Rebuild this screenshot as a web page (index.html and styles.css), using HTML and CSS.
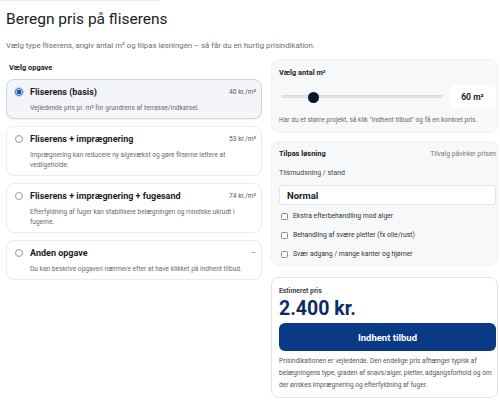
FILE: index.html
```html
<!DOCTYPE html>
<html lang="da">
<head>
<meta charset="utf-8">
<title>Beregn pris på fliserens</title>
<link rel="stylesheet" href="styles.css">
</head>
<body>
<div class="topline"></div>
<main class="page">
  <h1 class="title">Beregn pris på fliserens</h1>
  <p class="lead">Vælg type fliserens, angiv antal m² og tilpas løsningen – så får du en hurtig prisindikation.</p>

  <div class="layout">
    <section class="left">
      <div class="section-label">Vælg opgave</div>
      <div class="options">
        <label class="option selected">
          <span class="radio on"></span>
          <span class="opt-body">
            <span class="opt-head"><span class="opt-title">Fliserens (basis)</span><span class="opt-price">40 kr./m²</span></span>
            <span class="opt-desc">Vejledende pris pr. m² for grundrens af terrasse/indkørsel.</span>
          </span>
        </label>
        <label class="option">
          <span class="radio"></span>
          <span class="opt-body">
            <span class="opt-head"><span class="opt-title">Fliserens + imprægnering</span><span class="opt-price">53 kr./m²</span></span>
            <span class="opt-desc">Imprægnering kan reducere ny algevækst og gøre fliserne lettere at vedligeholde.</span>
          </span>
        </label>
        <label class="option">
          <span class="radio"></span>
          <span class="opt-body">
            <span class="opt-head"><span class="opt-title">Fliserens + imprægnering + fugesand</span><span class="opt-price">74 kr./m²</span></span>
            <span class="opt-desc">Efterfyldning af fuger kan stabilisere belægningen og mindske ukrudt i fugerne.</span>
          </span>
        </label>
        <label class="option">
          <span class="radio"></span>
          <span class="opt-body">
            <span class="opt-head"><span class="opt-title">Anden opgave</span><span class="opt-price dash">–</span></span>
            <span class="opt-desc">Du kan beskrive opgaven nærmere efter at have klikket på indhent tilbud.</span>
          </span>
        </label>
      </div>
    </section>

    <section class="right">
      <div class="panel area">
        <div class="panel-title">Vælg antal m²</div>
        <div class="slider-row">
          <input class="range" type="range" min="10" max="300" value="60">
          <div class="qty">60 m²</div>
        </div>
        <p class="hint">Har du et større projekt, så klik "Indhent tilbud" og få en konkret pris.</p>
      </div>

      <div class="panel custom">
        <div class="panel-head">
          <span class="panel-title">Tilpas løsning</span>
          <span class="panel-note">Tilvalg påvirker prisen</span>
        </div>
        <div class="field-label">Tilsmudsning / stand</div>
        <div class="select">Normal</div>
        <ul class="checks">
          <li><span class="box"></span>Ekstra efterbehandling mod alger</li>
          <li><span class="box"></span>Behandling af svære pletter (fx olie/rust)</li>
          <li><span class="box"></span>Svær adgang / mange kanter og hjørner</li>
        </ul>
      </div>

      <div class="price-card">
        <div class="price-label">Estimeret pris</div>
        <div class="price">2.400 kr.</div>
        <button class="cta" type="button">Indhent tilbud</button>
        <p class="disclaimer">Prisindikationen er vejledende. Den endelige pris afhænger typisk af belægningens type, graden af snavs/alger, pletter, adgangsforhold og om der ønskes imprægnering og efterfyldning af fuger.</p>
      </div>
    </section>
  </div>
</main>
</body>
</html>
```

FILE: styles.css
```css
* { box-sizing: border-box; }

html, body {
  margin: 0;
  padding: 0;
  background: #ffffff;
  font-family: Roboto, "Liberation Sans", Arial, sans-serif;
  color: #1d1d1f;
  overflow: hidden;
}

.topline {
  height: 1px;
  width: 160px;
  background: #ececec;
}

.page {
  padding: 7px 2px 0 6px;
}

.title {
  margin: 0;
  font-size: 15.5px;
  font-weight: 400;
  line-height: 22px;
  color: #202124;
}

.lead {
  margin: 11px 0 0;
  font-size: 7.8px;
  line-height: 10px;
  color: #6e6e6e;
}

.layout {
  display: grid;
  grid-template-columns: 256px 227px;
  column-gap: 9px;
  margin-top: 8px;
  align-items: start;
}

/* left column */
.section-label {
  margin: 4px 0 0 3px;
  font-size: 7.4px;
  font-weight: 700;
  line-height: 10px;
  color: #1d1d1f;
}

.options {
  display: flex;
  flex-direction: column;
  gap: 7px;
  margin-top: 6px;
}

.option {
  display: flex;
  align-items: flex-start;
  gap: 7px;
  padding: 6px 5px 5px 8px;
  border: 1px solid #ececec;
  border-radius: 8px;
  background: #ffffff;
}

.option.selected {
  background: #f3f5f9;
  border-color: #cfd4de;
  box-shadow: 0 1px 2px rgba(0, 0, 0, 0.06);
}

.radio {
  flex: none;
  width: 8px;
  height: 8px;
  margin-top: 2px;
  border: 1px solid #9a9a9a;
  border-radius: 50%;
  background: #fff;
}

.radio.on {
  border: 1px solid #2f62d8;
  background: radial-gradient(circle, #1f4fc4 0 2.2px, #ffffff 2.6px);
  box-shadow: 0 0 0 1px rgba(47, 98, 216, 0.25);
}

.opt-body {
  flex: 1;
  display: flex;
  flex-direction: column;
  gap: 5px;
}

.opt-head {
  display: flex;
  justify-content: space-between;
  align-items: center;
  line-height: 12px;
}

.opt-title {
  font-size: 9px;
  font-weight: 700;
  color: #1d1d1f;
}

.opt-price {
  font-size: 6.6px;
  color: #555;
}

.opt-price.dash {
  font-size: 8px;
  color: #777;
}

.opt-desc {
  font-size: 6.6px;
  line-height: 10px;
  color: #6a6a6a;
  padding-right: 12px;
}

/* right column */
.panel {
  background: #f7f8f9;
  border: 1px solid #eef0f2;
  border-radius: 8px;
}

.area {
  padding: 8px 1px 7px 7px;
}

.panel-title {
  font-size: 7.4px;
  font-weight: 700;
  line-height: 10px;
  color: #1d1d1f;
}

.slider-row {
  display: flex;
  align-items: center;
  gap: 6px;
  margin-top: 7px;
}

.range {
  -webkit-appearance: none;
  appearance: none;
  flex: 1;
  height: 12px;
  margin: 0 0 0 2px;
  background: transparent;
}

.range::-webkit-slider-runnable-track {
  height: 3px;
  border-radius: 2px;
  background: #e7e7e7;
  border: 0.5px solid #dcdcdc;
}

.range::-webkit-slider-thumb {
  -webkit-appearance: none;
  width: 11px;
  height: 11px;
  margin-top: -4.5px;
  border-radius: 50%;
  background: #0c1530;
  border: none;
}

.qty {
  flex: none;
  width: 47px;
  height: 23px;
  display: flex;
  align-items: center;
  justify-content: center;
  background: #ffffff;
  border-radius: 5px;
  font-size: 8.6px;
  font-weight: 700;
  color: #1d1d1f;
}

.hint {
  margin: 7px 0 0;
  font-size: 6.6px;
  line-height: 10px;
  color: #6a6a6a;
}

.custom {
  margin-top: 8px;
  padding: 7px 1px 6px 7px;
}

.panel-head {
  display: flex;
  justify-content: space-between;
  align-items: center;
}

.panel-note {
  font-size: 6.8px;
  color: #777;
  line-height: 10px;
}

.field-label {
  margin-top: 9px;
  font-size: 7px;
  line-height: 10px;
  color: #444;
}

.select {
  margin-top: 7px;
  height: 20px;
  display: flex;
  align-items: center;
  padding-left: 7px;
  background: #ffffff;
  border: 1px solid #e4e4e4;
  border-radius: 3px;
  font-size: 9.5px;
  font-weight: 700;
  color: #1d1d1f;
}

.checks {
  list-style: none;
  margin: 6px 0 0;
  padding: 0;
  display: flex;
  flex-direction: column;
  gap: 9px;
}

.checks li {
  display: flex;
  align-items: center;
  gap: 5px;
  padding-left: 2px;
  font-size: 6.8px;
  line-height: 10px;
  color: #333;
}

.box {
  flex: none;
  width: 7px;
  height: 7px;
  border: 1px solid #8a8a8a;
  border-radius: 1.5px;
  background: #fff;
}

.price-card {
  margin-top: 11px;
  padding: 8px 1px 6px 7px;
  border: 1px solid #e3e3e3;
  border-radius: 8px;
  background: #ffffff;
}

.price-label {
  font-size: 6.8px;
  font-weight: 700;
  line-height: 10px;
  color: #444;
}

.price {
  margin-top: 2px;
  font-size: 19.5px;
  font-weight: 700;
  line-height: 22px;
  color: #0d2b66;
}

.cta {
  display: block;
  width: 100%;
  height: 28px;
  margin-top: 3px;
  border: none;
  border-radius: 6px;
  background: #0a3a86;
  color: #ffffff;
  font-family: inherit;
  font-size: 9.5px;
  font-weight: 700;
}

.disclaimer {
  margin: 4px 0 0;
  font-size: 6.6px;
  line-height: 12px;
  color: #555;
}
```
